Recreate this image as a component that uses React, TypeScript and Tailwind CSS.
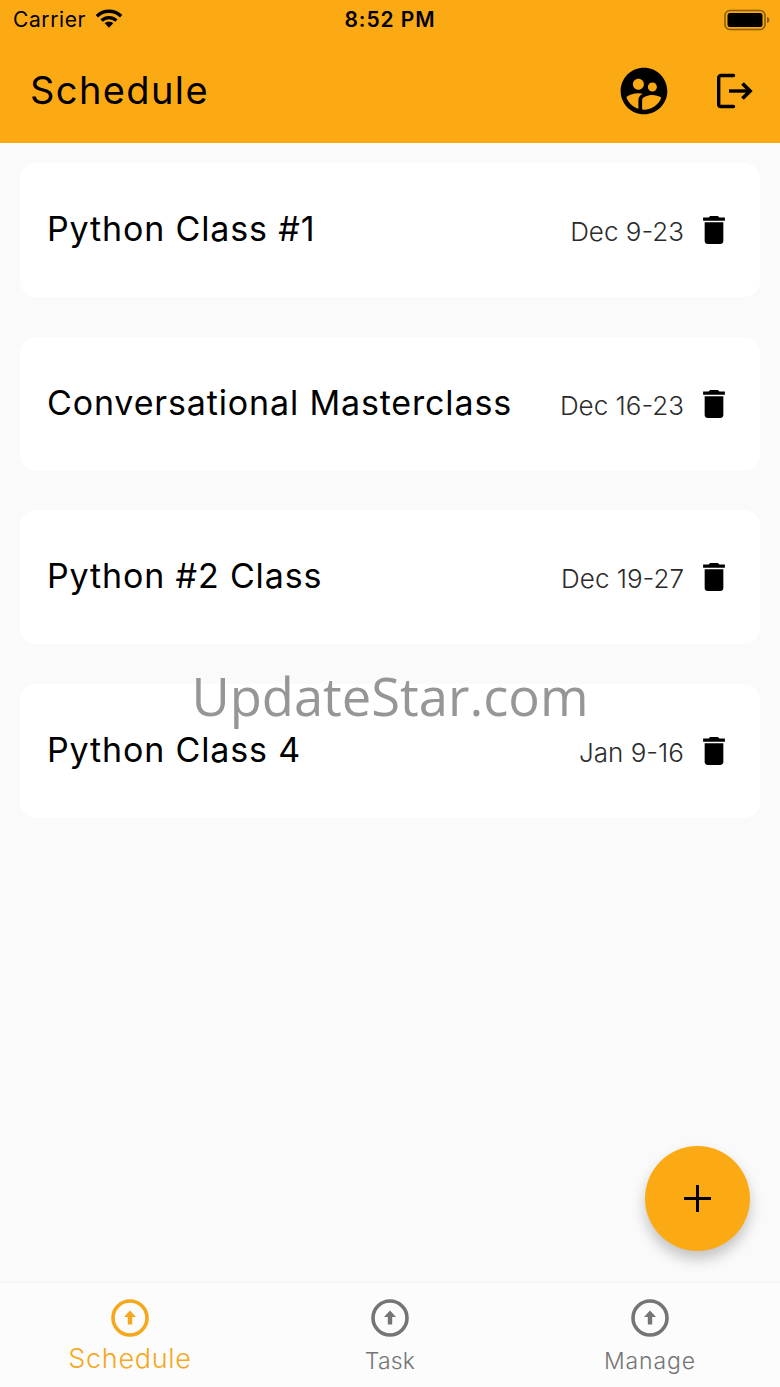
import { MdSupervisedUserCircle } from "react-icons/md";

const FONT = "font-['Inter','Liberation_Sans',sans-serif]";

const ITEMS = [
  { title: "Python Class #1", date: "Dec 9-23" },
  { title: "Conversational Masterclass", date: "Dec 16-23" },
  { title: "Python #2 Class", date: "Dec 19-27" },
  { title: "Python Class 4", date: "Jan 9-16" },
];

function Wifi() {
  return (
    <svg width="28" height="21" viewBox="0 0 30 22" fill="none" stroke="#000" strokeWidth="3.6" aria-hidden>
      <path d="M2 8.5C9.5 1.5 20.5 1.5 28 8.5" />
      <path d="M7 13.2C11.7 9 18.3 9 23 13.2" />
      <path d="M15 21l-4.6-5c2.6-2 6.6-2 9.2 0z" fill="#000" stroke="none" />
    </svg>
  );
}

function Battery() {
  return (
    <svg width="46" height="22" viewBox="0 0 46 22" fill="none" aria-hidden>
      <rect x="1" y="1.5" width="40" height="19" rx="5" stroke="#000" strokeOpacity="0.45" strokeWidth="1.6" />
      <rect x="3.5" y="4" width="35" height="14" rx="2.5" fill="#000" />
      <path d="M43 8c1.6.4 2.4 1.6 2.4 3s-.8 2.6-2.4 3z" fill="#000" fillOpacity="0.45" />
    </svg>
  );
}

function Logout() {
  return (
    <svg width="36" height="36" viewBox="0 0 36 36" fill="none" stroke="#000" strokeWidth="3.4" aria-hidden>
      <path d="M16.5 2.5H4a2.3 2.3 0 0 0-2.3 2.3v26.4A2.3 2.3 0 0 0 4 33.5h12.5" strokeLinecap="round" />
      <path d="M12 18h20" />
      <path d="M25.5 10.5l7.5 7.500-7.500 7.500" strokeWidth="3.8" />
    </svg>
  );
}

function Trash() {
  return (
    <svg width="22" height="28" viewBox="5 3 14 18" aria-hidden>
      <path d="M6 19c0 1.1.9 2 2 2h8c1.1 0 2-.9 2-2V7H6v12zM19 4h-3.5l-1-1h-5l-1 1H5v2h14V4z" fill="#000" />
    </svg>
  );
}

function TabIcon({ color }: { color: string }) {
  return (
    <svg width="38" height="38" viewBox="0 0 38 38" aria-hidden>
      <circle cx="19" cy="19" r="17" fill="none" stroke={color} strokeWidth="3.6" />
      <path d="M19 11.5l6 6.5h-3.8v7.5h-4.4V18H13z" fill={color} />
    </svg>
  );
}

function Card({ title, date }: { title: string; date: string }) {
  return (
    <div className="flex h-[134px] items-center rounded-2xl bg-white pl-[27px] pr-[35px]">
      <span className="pb-[3px] text-[34px] tracking-[0.85px] text-black">{title}</span>
      <span className="ml-auto pt-[3px] text-[26px] font-light text-[#2b2b2b]">{date}</span>
      <span className="ml-[19px] flex">
        <Trash />
      </span>
    </div>
  );
}

export default function App() {
  return (
    <div className={`relative flex h-[1387px] w-[780px] flex-col overflow-hidden bg-[#fafafa] ${FONT}`}>
      <header className="h-[143px] shrink-0 bg-[#fbaa13]">
        <div className="relative flex h-10 items-center px-[13px] text-[21px] text-black">
          <span className="tracking-[0.6px]">Carrier</span>
          <span className="mb-1 ml-[9px] flex">
            <Wifi />
          </span>
          <span className="absolute right-0 left-0 text-center font-semibold tracking-[0.9px]">8:52 PM</span>
          <span className="mr-[-3px] ml-auto flex">
            <Battery />
          </span>
        </div>
        <div className="flex h-[103px] items-center pr-[27px] pb-[2px] pl-[30px]">
          <h1 className="text-[38px] font-normal tracking-[1.4px] text-black">Schedule</h1>
          <span className="ml-auto flex">
            <MdSupervisedUserCircle size={56} color="#000" />
          </span>
          <span className="ml-[45px] flex">
            <Logout />
          </span>
        </div>
      </header>

      <main className="flex flex-1 flex-col gap-[39.5px] px-5 pt-5">
        {ITEMS.map((item) => (
          <Card key={item.title} title={item.title} date={item.date} />
        ))}
      </main>

      <nav className="flex h-[106px] shrink-0 border-t-2 border-[#f5f5f5] bg-[#fcfcfc]">
        <div className="flex w-[260px] flex-col items-center pt-4">
          <TabIcon color="#f5a81c" />
          <span className="mt-[6px] text-[27px] leading-8 font-light tracking-[0.7px] text-[#f5a81c]">Schedule</span>
        </div>
        <div className="flex w-[260px] flex-col items-center pt-4">
          <TabIcon color="#757575" />
          <span className="mt-2 text-[23px] leading-8 font-light tracking-[0.2px] text-[#757575]">Task</span>
        </div>
        <div className="flex w-[260px] flex-col items-center pt-4">
          <TabIcon color="#757575" />
          <span className="mt-2 text-[23px] leading-8 font-light tracking-[0.9px] text-[#757575]">Manage</span>
        </div>
      </nav>

      <button className="absolute top-[1146px] left-[645px] flex h-[105px] w-[105px] items-center justify-center rounded-full bg-[#fbaa13] shadow-[0_8px_14px_rgba(0,0,0,0.22)]">
        <svg width="27" height="27" viewBox="0 0 27 27" stroke="#000" strokeWidth="3" aria-hidden>
          <path d="M13.5 0v27M0 13.5h27" />
        </svg>
      </button>

      <div className="pointer-events-none absolute top-[658px] left-0 w-full text-center font-['Open_Sans',sans-serif] text-[52.5px] leading-[76px] font-normal text-[#969696]">
        UpdateStar.com
      </div>
    </div>
  );
}
